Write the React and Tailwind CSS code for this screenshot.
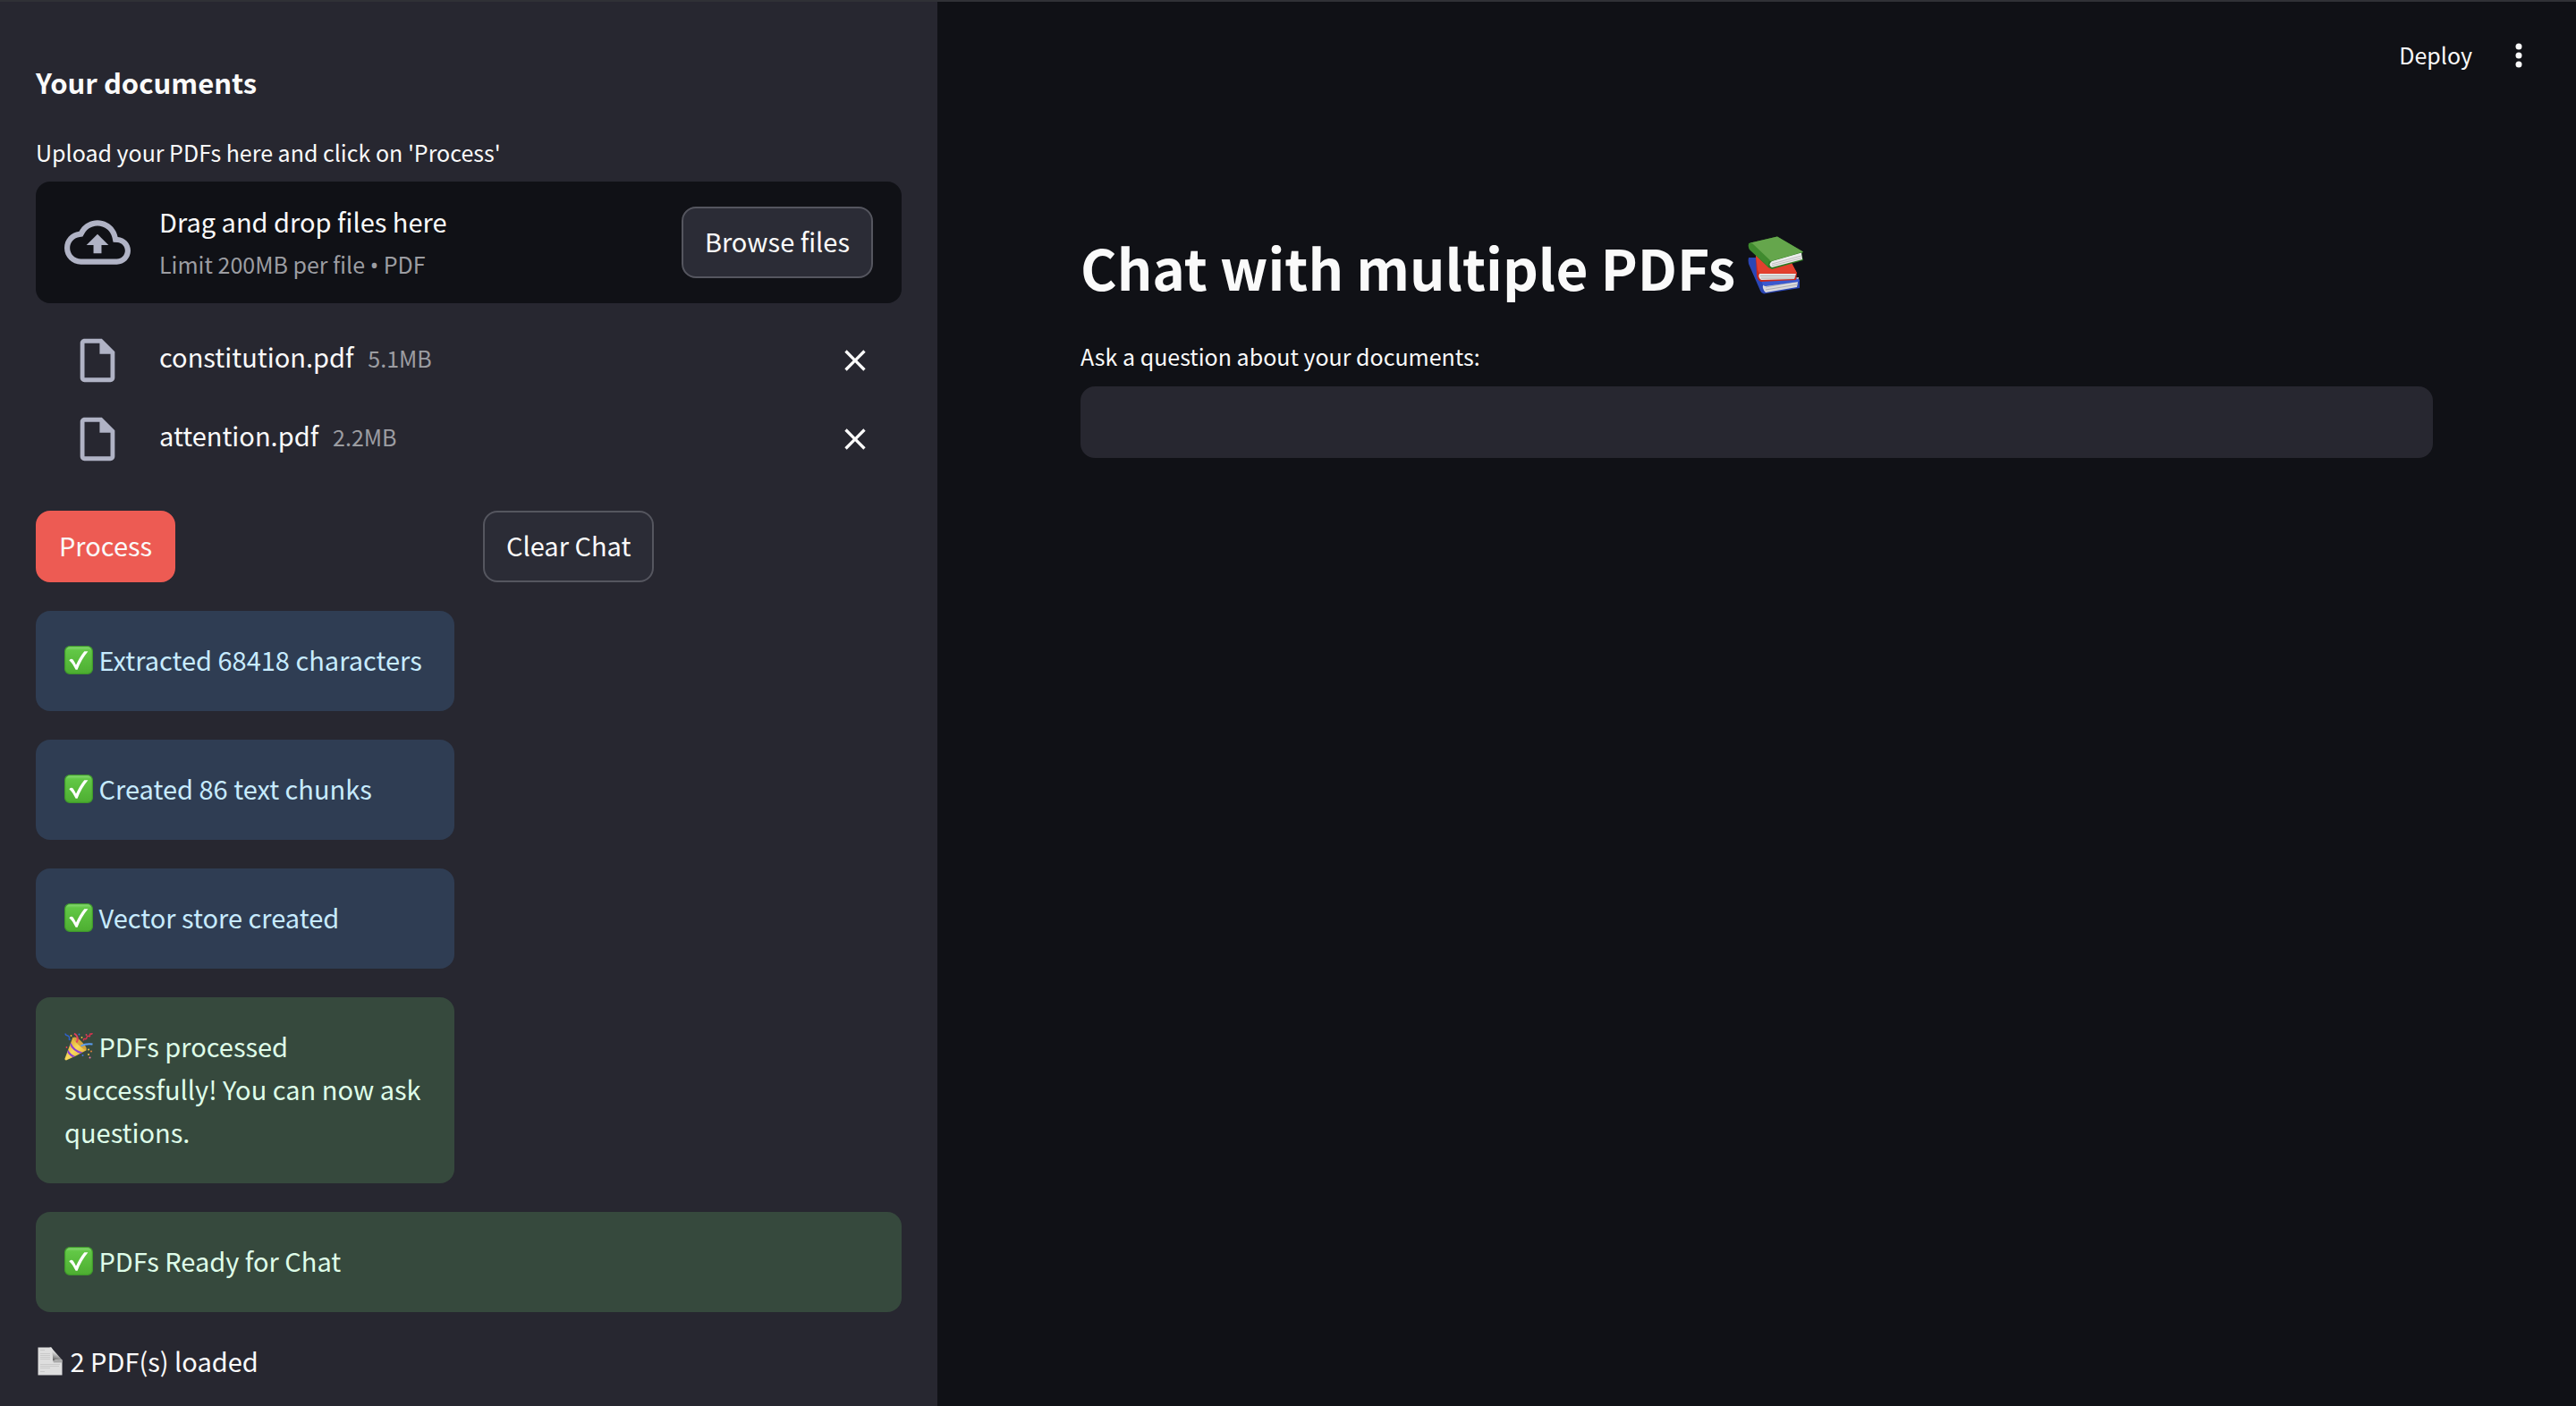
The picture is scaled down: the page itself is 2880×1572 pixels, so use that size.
import React from "react";

function CheckEmoji() {
  return (
    <svg role="img" aria-label="check mark" viewBox="0 0 32 32" className="inline-block h-8 w-8 align-[-4px]">
      <defs>
        <linearGradient id="checkGreen" x1="0" y1="0" x2="0" y2="1">
          <stop offset="0" stopColor="#8fdc7c" />
          <stop offset="0.14" stopColor="#62c846" />
          <stop offset="1" stopColor="#4dae31" />
        </linearGradient>
      </defs>
      <rect x="0.6" y="0.6" width="30.8" height="30.8" rx="5.5" fill="url(#checkGreen)" stroke="#3f9a2b" strokeWidth="1.2" />
      <path d="M5.3 16.2 C7 14.6 8.6 14.4 9.8 15.8 C11 17.5 12 19.500 13 21.600 C15.500 15.800 18.500 10.700 22.300 6.200 L26.400 6.200 C21.300 12.400 17.300 19.300 14.600 26.800 L12.600 26.800 C10.700 22.800 8.500 19 5.3 16.200 Z" fill="#fff" />
    </svg>
  );
}

function PartyEmoji() {
  return (
    <svg role="img" aria-label="party popper" viewBox="0 0 32 32" className="inline-block h-8 w-8 align-[-4px]">
      <defs>
        <linearGradient id="cone" x1="0" y1="0" x2="1" y2="1">
          <stop offset="0" stopColor="#c98e22" />
          <stop offset="0.5" stopColor="#f8d95c" />
          <stop offset="1" stopColor="#d9a02d" />
        </linearGradient>
        <clipPath id="coneClip">
          <path d="M9.500 5.500 L25 20 Q13 27 2 31.500 Q0 31.500 0.500 29.500 Z" />
        </clipPath>
      </defs>
      <path d="M9.500 5.500 L25 20 Q13 27 2 31.500 Q0 31.500 0.500 29.500 Z" fill="url(#cone)" />
      <ellipse cx="17.500" cy="12.500" rx="2.600" ry="9.800" transform="rotate(-46 17.500 12.500)" fill="#d3a53c" />
      <g clipPath="url(#coneClip)" fill="none" stroke="#8b3fd0" strokeWidth="2">
        <path d="M6.500 12.500 Q10 21 20 23.500" />
        <path d="M3.500 20.500 Q6 26 12 28" />
      </g>
      <path d="M13.500 11.500 C16 8 15 4 11 1.500" fill="none" stroke="#e5405e" strokeWidth="2" />
      <path d="M18.500 15.500 Q24 12.500 31.500 13.500" fill="none" stroke="#5a9bf0" strokeWidth="1.800" />
      <path d="M1 1.500 C1 5 5 2.500 5.500 6 S4 6.500 6.500 9" fill="none" stroke="#2f62cf" strokeWidth="1.500" />
      <path d="M21.500 9.500 C21 5 24.500 10 25 6 S29 7 28.500 3.500 S31 4 31 1" fill="none" stroke="#d83350" strokeWidth="1.500" />
      <circle cx="7.500" cy="4" r="0.900" fill="#f0c63b" />
      <circle cx="16.500" cy="2.500" r="0.900" fill="#3e73e0" />
      <circle cx="19.500" cy="6" r="0.900" fill="#f0c63b" />
      <circle cx="2.500" cy="17" r="0.900" fill="#e5405e" />
      <circle cx="24.500" cy="3" r="0.900" fill="#e5405e" />
      <circle cx="27" cy="19.500" r="1" fill="#f0c63b" />
      <circle cx="30" cy="21.500" r="0.900" fill="#f0863b" />
      <circle cx="20.500" cy="26" r="1" fill="#3e73e0" />
      <circle cx="27" cy="25" r="1" fill="#f0c63b" />
      <circle cx="28.500" cy="28.500" r="1" fill="#f07ab0" />
    </svg>
  );
}

function PageEmoji() {
  return (
    <svg role="img" aria-label="page" viewBox="0 0 32 32" className="inline-block h-8 w-8 align-[-4px]">
      <defs>
        <linearGradient id="fold" x1="0.300" y1="1" x2="0.600" y2="0">
          <stop offset="0" stopColor="#5a5a5a" />
          <stop offset="0.600" stopColor="#d8d8d8" />
          <stop offset="1" stopColor="#f4f4f4" />
        </linearGradient>
      </defs>
      <path d="M2.500 0.500 H17.500 Q20 3 20 14.500 Q26 12 29.500 14.500 V31.500 H2.500 Z" fill="#dedede" />
      <path d="M17 0.500 L29.500 14.500 Q24 12.500 19 15.500 Q19.500 4 15.500 0.500 Z" fill="url(#fold)" />
      <path d="M19 15.500 Q24 13 29.500 14.500 V17.500 H20 Z" fill="#a9a9a9" />
      <path d="M5 3.500 H10 M5 7.500 H16 M5 9.500 H16 M5 11.500 H16 M5 13.500 H16 M5 19.500 H27 M5 21.500 H26 M5 23.500 H16 M5 27.500 H10" stroke="#c6c6c6" strokeWidth="0.900" />
    </svg>
  );
}

function BooksEmoji() {
  return (
    <svg role="img" aria-label="books" viewBox="0 0 64 66" className="inline-block h-[66px] w-16 align-[-5px]">
      <path d="M1 24 L9 24 L58 49 L58 58 L18 64.500 Q15 64 14 61 L1 31 Q0 27 1 24 Z" fill="#2b46b5" />
      <path d="M18 53 L57 46 L55 57 L20 63 Q15 58 18 53 Z" fill="#d9d9dc" />
      <path d="M20 57 L56 50.500 M20 60 L56 54" stroke="#a9a9b0" strokeWidth="0.900" />
      <path d="M14 48 L50 45 L58 49 L57 51 L20 56 Q17 56 16 52 Z" fill="#3a58cf" />
      <path d="M9 22 L49 30 L55 41 L54 49 L15 51 Q11 50 10 44 Z" fill="#c9291d" />
      <path d="M13 42 L54 42 L52 48 L15 49 Q11 46 13 42 Z" fill="#e4e4e4" />
      <path d="M14 44.500 H53 M15 47 H52" stroke="#aaa" strokeWidth="0.900" />
      <path d="M9 22 L49 30 L55 41.500 L14 42 Q12 41 11 38 Z" fill="#e3402e" />
      <path d="M1 8 L33 0.500 L62 17.500 L60 20 L62 27 L27 37 Q23 36 20 32 L2 15 Q0 11 1 8 Z" fill="#2f7a24" />
      <path d="M27 28 L60 18.500 L61 26 L27 35 Q22 32 27 28 Z" fill="#ececec" />
      <path d="M27 31 L60 22 M27 33 L60 24.500" stroke="#b9b9b9" strokeWidth="0.900" />
      <path d="M3 7.500 L33 0.500 L62 17.500 L26 28 Q23 28 21 26 L3 10 Z" fill="#65a64c" />
      <path d="M1 9 Q1 7 5 8 L25 27 Q22 30 23 34 L3 16 Q0 13 1 9 Z" fill="#3f8a2e" />
    </svg>
  );
}

const buttonBase = "h-20 rounded-2xl border-2 px-6 pb-1 text-[29px] leading-[44px] whitespace-nowrap";

function FileRow({ name, size }) {
  return (
    <li className="flex h-[88px] items-center px-8">
      <span className="flex w-[74px] shrink-0 justify-center">
        <svg aria-hidden="true" viewBox="0 0 24 24" className="h-[58px] w-[58px] fill-[#b0b3c5]">
          <path d="M14 2H6c-1.100 0-1.990.900-1.990 2L4 20c0 1.100.890 2 1.990 2H18c1.100 0 2-.900 2-2V8l-6-6zM6 20V4h7v5h5v11H6z" />
        </svg>
      </span>
      <span className="ml-8 flex items-baseline gap-4 pb-2">
        <span className="text-[29px] leading-[44px]">{name}</span>
        <small className="text-[25px] leading-[44px] text-[#9c9da2]">{size}</small>
      </span>
      <button type="button" aria-label={`Remove ${name}`} className="ml-auto">
        <svg aria-hidden="true" viewBox="0 0 24 24" className="h-10 w-10 fill-[#fafafa]">
          <path d="M19 6.410L17.590 5 12 10.590 6.410 5 5 6.410 10.590 12 5 17.590 6.410 19 12 13.410 17.590 19 19 17.590 13.410 12z" />
        </svg>
      </button>
    </li>
  );
}

function Alert({ tone, children }) {
  const colors = tone === "info" ? "bg-[#2f3d53] text-[#c7ebff]" : "bg-[#36493d] text-[#dffde9]";
  return <div role="status" className={`rounded-2xl px-8 pt-[30px] pb-[34px] ${colors}`}>{children}</div>;
}

export default function App() {
  return (
    <div className="grid min-h-screen grid-cols-[131fr_229fr] border-t-2 border-[#303136] bg-[#101116] font-['Noto_Sans_CJK_SC','Noto_Sans',sans-serif] text-[29px] leading-[48px] text-[#fafafa]">
      <aside className="bg-[#272730] px-10 pt-[68px]">
        <h2 className="text-[31px] leading-[44px] font-bold">Your documents</h2>
        <label htmlFor="pdfs" className="mt-[34px] block text-[25px] leading-[44px]">Upload your PDFs here and click on 'Process'</label>
        <section className="mt-[11px] flex h-[136px] items-center rounded-2xl bg-[#101116] px-8">
          <svg aria-hidden="true" viewBox="0 0 24 24" className="h-[74px] w-[74px] shrink-0 fill-[#b0b3c5]">
            <path d="M19.350 10.040C18.670 6.590 15.640 4 12 4 9.110 4 6.600 5.640 5.350 8.040 2.340 8.360 0 10.910 0 14c0 3.310 2.690 6 6 6h13c2.760 0 5-2.240 5-5 0-2.640-2.050-4.780-4.650-4.960zM19 18H6c-2.210 0-4-1.790-4-4 0-2.050 1.530-3.760 3.560-3.970l1.070-.110.500-.950C8.080 7.140 9.940 6 12 6c2.620 0 4.880 1.860 5.390 4.430l.300 1.500 1.530.110c1.560.100 2.780 1.410 2.780 2.960 0 1.650-1.350 3-3 3zM8 13h2.550v3h2.900v-3H16l-4-4z" />
          </svg>
          <div className="ml-8">
            <p className="leading-[44px]">Drag and drop files here</p>
            <p className="mt-1 text-[25px] leading-[44px] text-[#9c9da2]">
              Limit 200MB per file <span className="font-['Noto_Sans',sans-serif]">•</span> PDF
            </p>
          </div>
          <button id="pdfs" type="button" className={`${buttonBase} ml-auto border-[#55565f] bg-[#2b2c36]`}>Browse files</button>
        </section>
        <ul className="mt-5">
          <FileRow name="constitution.pdf" size="5.1MB" />
          <FileRow name="attention.pdf" size="2.2MB" />
        </ul>
        <div className="mt-9 grid grid-cols-2 items-start gap-8">
          <div className="flex flex-col gap-8">
            <button type="button" className={`${buttonBase} self-start border-[#ed5b53] bg-[#ed5b53]`}>Process</button>
            <Alert tone="info"><CheckEmoji /> Extracted 68418 characters</Alert>
            <Alert tone="info"><CheckEmoji /> Created 86 text chunks</Alert>
            <Alert tone="info"><CheckEmoji /> Vector store created</Alert>
            <Alert tone="success"><PartyEmoji /> PDFs processed successfully! You can now ask questions.</Alert>
          </div>
          <button type="button" className={`${buttonBase} justify-self-start border-[#55565f] bg-[#2b2c36]`}>Clear Chat</button>
        </div>
        <div className="mt-8">
          <Alert tone="success"><CheckEmoji /> PDFs Ready for Chat</Alert>
        </div>
        <p className="mt-[30px]"><PageEmoji /> 2 PDF(s) loaded</p>
      </aside>
      <main>
        <header className="flex h-[120px] items-center justify-end gap-7 pr-10">
          <button type="button" className="pb-[3px] text-[25px] leading-[44px]">Deploy</button>
          <button type="button" aria-label="Menu">
            <svg aria-hidden="true" viewBox="0 0 48 48" className="h-12 w-12 fill-[#fafafa]">
              <circle cx="24" cy="14" r="3.500" />
              <circle cx="24" cy="24" r="3.500" />
              <circle cx="24" cy="34" r="3.500" />
            </svg>
          </button>
        </header>
        <div className="px-40 pt-[132px]">
          <h1 className="text-[62px] leading-[88px] font-bold">Chat with multiple PDFs <BooksEmoji /></h1>
          <label htmlFor="question" className="mt-[34px] block text-[25px] leading-[44px]">Ask a question about your documents:</label>
          <input id="question" type="text" className="mt-3 h-20 w-full rounded-2xl bg-[#272730] px-6 outline-none" />
        </div>
      </main>
    </div>
  );
}
